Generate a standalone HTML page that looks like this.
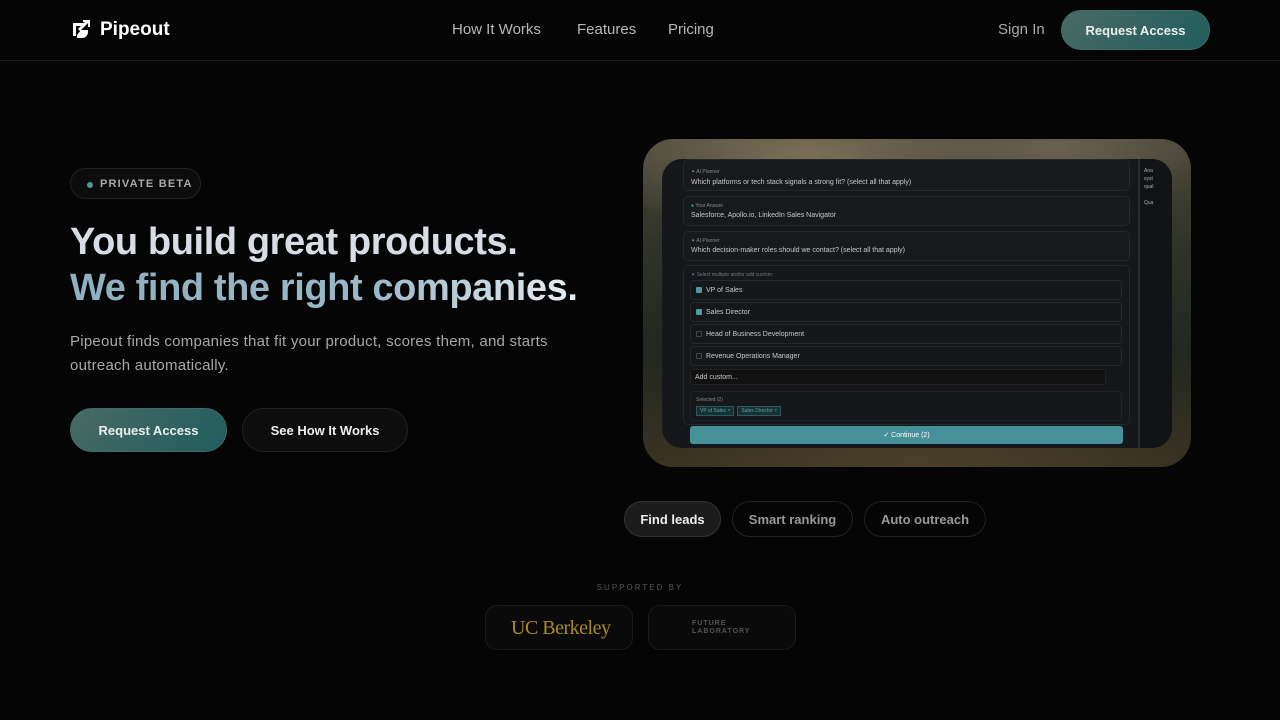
<!DOCTYPE html>
<html><head><meta charset="utf-8"><style>
*{margin:0;padding:0;box-sizing:border-box}
body{width:1280px;height:720px;background:#050505;font-family:"Liberation Sans",sans-serif;color:#fff;position:relative;overflow:hidden}
.nav{position:absolute;top:0;left:0;width:1280px;height:61px;border-bottom:1px solid #1a1a1a}
.logo{position:absolute;left:71px;top:19px;display:flex;align-items:center;gap:9px;font-weight:bold;font-size:19px}
.links{position:absolute;top:21px;left:452px;font-size:15px;color:#b8b8b8}
.links span{position:absolute;white-space:nowrap}
.btn{position:absolute;border-radius:22px;font-weight:bold;font-size:13px;display:flex;align-items:center;justify-content:center;color:#eee}
.grad{background:linear-gradient(135deg,#4a6a64,#1f5d5d);border:1px solid #3d6d68}
.dark{background:#0d0d0d;border:1px solid #222}
.badge{position:absolute;left:70px;top:168px;width:131px;height:31px;border:1px solid #222;border-radius:16px;background:#0c0c0c;font-size:11px;font-weight:bold;letter-spacing:1.2px;color:#aaa;display:flex;align-items:center;padding-left:29px}
.badge:before{content:"";position:absolute;left:16px;top:13px;width:6px;height:6px;border-radius:3px;background:#4a9a90}
h1{position:absolute;left:70px;top:219px;font-size:38px;line-height:46px;letter-spacing:-0.4px;font-weight:bold;white-space:nowrap}
.l1{color:#d8dde5}
.l2{background:linear-gradient(90deg,#8fb0c0 0%,#9ab8c8 60%,#e8eef2 100%);-webkit-background-clip:text;color:transparent}
.sub{position:absolute;left:70px;top:330px;width:530px;font-size:15px;letter-spacing:0.25px;line-height:24px;color:#a8a8a8}
.frame{position:absolute;left:643px;top:139px;width:548px;height:328px;border-radius:30px;background:radial-gradient(ellipse 40% 25% at 30% 5%,#7a7058,transparent),radial-gradient(ellipse 30% 20% at 75% 3%,#6a6250,transparent),radial-gradient(ellipse 50% 30% at 50% 100%,#4a4028,transparent),linear-gradient(180deg,#4a4638 0%,#2e3228 35%,#222820 65%,#3a3222 100%)}
.screen{position:absolute;left:19px;top:20px;width:510px;height:289px;border-radius:20px;background:#15171a;overflow:hidden;font-size:7px;color:#c8c8c8}
.card{position:absolute;left:21px;width:447px;border:1px solid #24272b;border-radius:5px;background:#17191d}
.opt{position:absolute;left:28px;width:432px;height:20px;border:1px solid #25282c;border-radius:4px;background:#15171a;padding:6px 0 0 15px}
.chk{position:absolute;left:5px;top:6px;width:6px;height:6px;border-radius:1px;border:1px solid #444}
.on{background:#4a9aa0;border-color:#4a9aa0}
.pill{position:absolute;top:501px;height:36px;border-radius:18px;border:1px solid #222;font-size:13px;font-weight:bold;color:#999;display:flex;align-items:center;justify-content:center}
.sb{position:absolute;top:605px;height:45px;border:1px solid #1a1a1a;border-radius:12px;background:#0a0a0a}
</style></head><body>
<div class="nav">
<div class="logo"><svg width="20" height="20" viewBox="0 0 20 20"><path d="M2 3h11l-3 3H5v10H2z" fill="#fff"/><path d="M6 15l4-5h7v2a6 6 0 0 1-6 6H6z" fill="#fff"/><path d="M8 10l9-9" stroke="#fff" stroke-width="3"/><path d="M12 1h6v6" stroke="#fff" stroke-width="2" fill="none"/></svg>Pipeout</div>
<div class="links"><span style="left:0">How It Works</span><span style="left:125px">Features</span><span style="left:216px">Pricing</span></div>
<span style="position:absolute;left:998px;top:21px;font-size:15px;color:#aaa">Sign In</span>
<div class="btn grad" style="left:1061px;top:10px;width:149px;height:40px">Request Access</div>
</div>
<div class="badge">PRIVATE BETA</div>
<h1><div class="l1">You build great products.</div><div class="l2">We find the right companies.</div></h1>
<div class="sub">Pipeout finds companies that fit your product, scores them, and starts outreach automatically.</div>
<div class="btn grad" style="left:70px;top:408px;width:157px;height:44px">Request Access</div>
<div class="btn dark" style="left:242px;top:408px;width:166px;height:44px">See How It Works</div>

<div class="frame"><div class="screen">
<div class="card" style="top:0;height:32px"><div style="position:absolute;left:7px;top:9px;font-size:5px;color:#888">✦ AI Planner</div><div style="position:absolute;left:7px;top:19px">Which platforms or tech stack signals a strong fit? (select all that apply)</div></div>
<div class="card" style="top:37px;height:30px"><div style="position:absolute;left:7px;top:6px;font-size:5px;color:#888"><span style="color:#4a9">●</span> Your Answer</div><div style="position:absolute;left:7px;top:15px">Salesforce, Apollo.io, LinkedIn Sales Navigator</div></div>
<div class="card" style="top:72px;height:30px"><div style="position:absolute;left:7px;top:6px;font-size:5px;color:#888">✦ AI Planner</div><div style="position:absolute;left:7px;top:15px">Which decision-maker roles should we contact? (select all that apply)</div></div>
<div class="card" style="top:106px;height:160px;background:transparent"><div style="position:absolute;left:7px;top:6px;font-size:5px;color:#777">✦ Select multiple and/or add custom</div></div>
<div class="opt" style="top:121px"><div class="chk on"></div>VP of Sales</div>
<div class="opt" style="top:143px"><div class="chk on"></div>Sales Director</div>
<div class="opt" style="top:165px"><div class="chk"></div>Head of Business Development</div>
<div class="opt" style="top:187px"><div class="chk"></div>Revenue Operations Manager</div>
<div style="position:absolute;left:28px;top:210px;width:416px;height:16px;border:1px solid #222;border-radius:3px;background:#111;padding:4px 0 0 4px">Add custom...</div>
<div style="position:absolute;left:28px;top:232px;width:432px;height:30px;border:1px solid #222;border-radius:4px;font-size:5px;color:#888;padding:5px 5px">Selected (2)<div style="margin-top:3px;display:flex;gap:3px"><span style="border:1px solid #2a5a5a;background:#183032;color:#5aa;padding:1px 3px">VP of Sales ×</span><span style="border:1px solid #2a5a5a;background:#183032;color:#5aa;padding:1px 3px">Sales Director ×</span></div></div>
<div style="position:absolute;left:28px;top:267px;width:433px;height:18px;border-radius:3px;background:#46909a;color:#fff;text-align:center;padding-top:5px;font-size:7px">✓ Continue (2)</div>
<div style="position:absolute;left:476px;top:0;width:2px;height:289px;background:#2a2c30"></div>
<div style="position:absolute;left:478px;top:0;width:32px;height:289px;background:#111316;font-size:5px;color:#aaa;padding:8px 4px;line-height:8px">Ana<br>syst<br>qual<br><br>Qua</div>
</div></div>

<div class="pill" style="left:624px;width:97px;background:#1c1c1c;border-color:#333;color:#eee">Find leads</div>
<div class="pill" style="left:732px;width:121px">Smart ranking</div>
<div class="pill" style="left:864px;width:122px">Auto outreach</div>

<div style="position:absolute;left:0;width:1280px;top:583px;text-align:center;font-size:8px;letter-spacing:2px;color:#555">SUPPORTED BY</div>
<div class="sb" style="left:485px;width:148px"><div style="position:absolute;left:25px;top:11px;font-family:'Liberation Serif',serif;font-size:20px;color:#a88a20;letter-spacing:-0.5px">UC Berkeley</div></div>
<div class="sb" style="left:648px;width:148px"><div style="position:absolute;left:43px;top:14px;font-size:7px;line-height:8px;color:#555;letter-spacing:1px;font-weight:bold">FUTURE<br>LABORATORY</div></div>
</body></html>
